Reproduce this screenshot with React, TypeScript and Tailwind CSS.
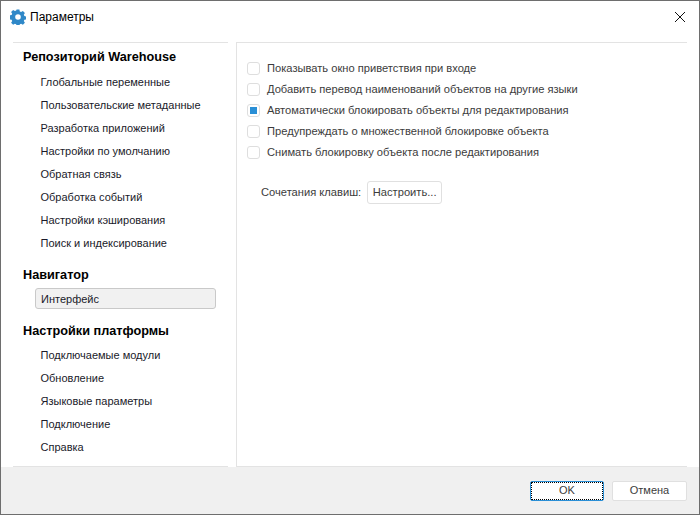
import React from 'react'

const repoItems = [
  'Глобальные переменные',
  'Пользовательские метаданные',
  'Разработка приложений',
  'Настройки по умолчанию',
  'Обратная связь',
  'Обработка событий',
  'Настройки кэширования',
  'Поиск и индексирование',
]

const platformItems = ['Подключаемые модули', 'Обновление', 'Языковые параметры', 'Подключение', 'Справка']

const options = [
  { label: 'Показывать окно приветствия при входе', checked: false },
  { label: 'Добавить перевод наименований объектов на другие языки', checked: false },
  { label: 'Автоматически блокировать объекты для редактирования', checked: true },
  { label: 'Предупреждать о множественной блокировке объекта', checked: false },
  { label: 'Снимать блокировку объекта после редактирования', checked: false },
]

function GearIcon() {
  return (
    <svg width="16" height="16" viewBox="0 0 16 16">
      <path
        fill="#2f88c8"
        fillRule="evenodd"
        d="M6.6 0.5h2.8l.4 2 1.3.6 1.8-1.1 2 2-1.1 1.8.6 1.3 2 .4v2.8l-2 .4-.6 1.3 1.1 1.8-2 2-1.8-1.1-1.3.6-.4 2H6.6l-.4-2-1.3-.6-1.8 1.1-2-2 1.1-1.8-.6-1.3-2-.4V6.4l2-.4.6-1.3L1.1 2.9l2-2 1.8 1.1 1.3-.6zM8 5.2a2.8 2.8 0 1 0 0 5.6 2.8 2.8 0 0 0 0-5.6z"
      />
    </svg>
  )
}

function SectionTitle({ children }: { children: React.ReactNode }) {
  return <div className="pl-[22px] h-[23px] leading-[23px] text-[12.7px] font-bold text-black">{children}</div>
}

function NavItem({ label }: { label: string }) {
  return <div className="pl-[39.5px] h-[23px] leading-[23px] text-[#1a1a2a]">{label}</div>
}

export default function App() {
  return (
    <div
      className="w-[700px] h-[515px] flex flex-col bg-white border border-[#6e6e6e] text-[11px] text-[#222]"
      style={{ fontFamily: '"Liberation Sans", Arial, sans-serif' }}
    >
      <div className="h-[31px] shrink-0 flex items-center pl-[9px] pr-[13px]">
        <GearIcon />
        <span className="ml-[4px] text-[12px] text-black">Параметры</span>
        <svg className="ml-auto" width="12" height="12" viewBox="0 0 12 12">
          <path d="M1 1l10 10M11 1L1 11" stroke="#111" strokeWidth="1" fill="none" />
        </svg>
      </div>

      <div className="h-[435px] shrink-0 flex pt-[10px]">
        <div className="w-[235px] shrink-0 flex flex-col pl-0">
          <div className="ml-[12px] w-[215px] border-t border-[#e3e3e3]" />
          <div className="pt-[3px] flex-1">
            <SectionTitle>Репозиторий Warehouse</SectionTitle>
            <div className="pt-[2px]">
              {repoItems.map((item) => (
                <NavItem key={item} label={item} />
              ))}
            </div>
            <div className="mt-[9px]">
              <SectionTitle>Навигатор</SectionTitle>
            </div>
            <div className="ml-[34px] mt-[1px] w-[181px] h-[21px] leading-[20px] pl-[5px] bg-[#f1f1f1] border border-[#c9c9c9] rounded-[3px] text-[#1a1a2a]">
              Интерфейс
            </div>
            <div className="mt-[11px]">
              <SectionTitle>Настройки платформы</SectionTitle>
            </div>
            <div className="pt-[1px]">
              {platformItems.map((item) => (
                <NavItem key={item} label={item} />
              ))}
            </div>
          </div>
          <div className="ml-[12px] w-[215px] border-t border-[#e3e3e3]" />
        </div>

        <div className="flex-1 flex flex-col border-l border-[#e3e3e3]">
          <div className="w-[450px] border-t border-[#e3e3e3]" />
          <div className="flex-1 pt-[15px] pl-[10px] text-[11.15px]">
            {options.map((o) => (
              <div key={o.label} className="h-[21px] flex items-center">
                <span className="w-[13px] h-[13px] flex items-center justify-center border border-[#dedede] rounded-[3px] bg-white">
                  {o.checked && <span className="w-[7px] h-[7px] bg-[#2a8fd6]" />}
                </span>
                <span className="ml-[7px] text-[#3c3c3c]">{o.label}</span>
              </div>
            ))}
            <div className="mt-[18px] ml-[14px] flex items-center">
              <span className="text-[#3c3c3c]">Сочетания клавиш:</span>
              <span className="ml-[6px] w-[75px] h-[23px] leading-[21px] text-center border border-[#e0e0e0] rounded-[3px] text-[#3c3c3c]">
                Настроить...
              </span>
            </div>
          </div>
          <div className="w-[450px] border-t border-[#e3e3e3]" />
        </div>
      </div>

      <div className="flex-1 bg-[#f0f0f0] flex items-center justify-end pr-[12px] gap-[8px]">
        <button className="w-[74px] h-[20px] bg-white border border-[#2a8fd6] rounded-[2px] text-[#3c3c3c] outline-1 outline-dotted outline-black -outline-offset-2">
          OK
        </button>
        <button className="w-[75px] h-[20px] bg-white border border-[#e0e0e0] rounded-[2px] text-[#3c3c3c]">Отмена</button>
      </div>
    </div>
  )
}
